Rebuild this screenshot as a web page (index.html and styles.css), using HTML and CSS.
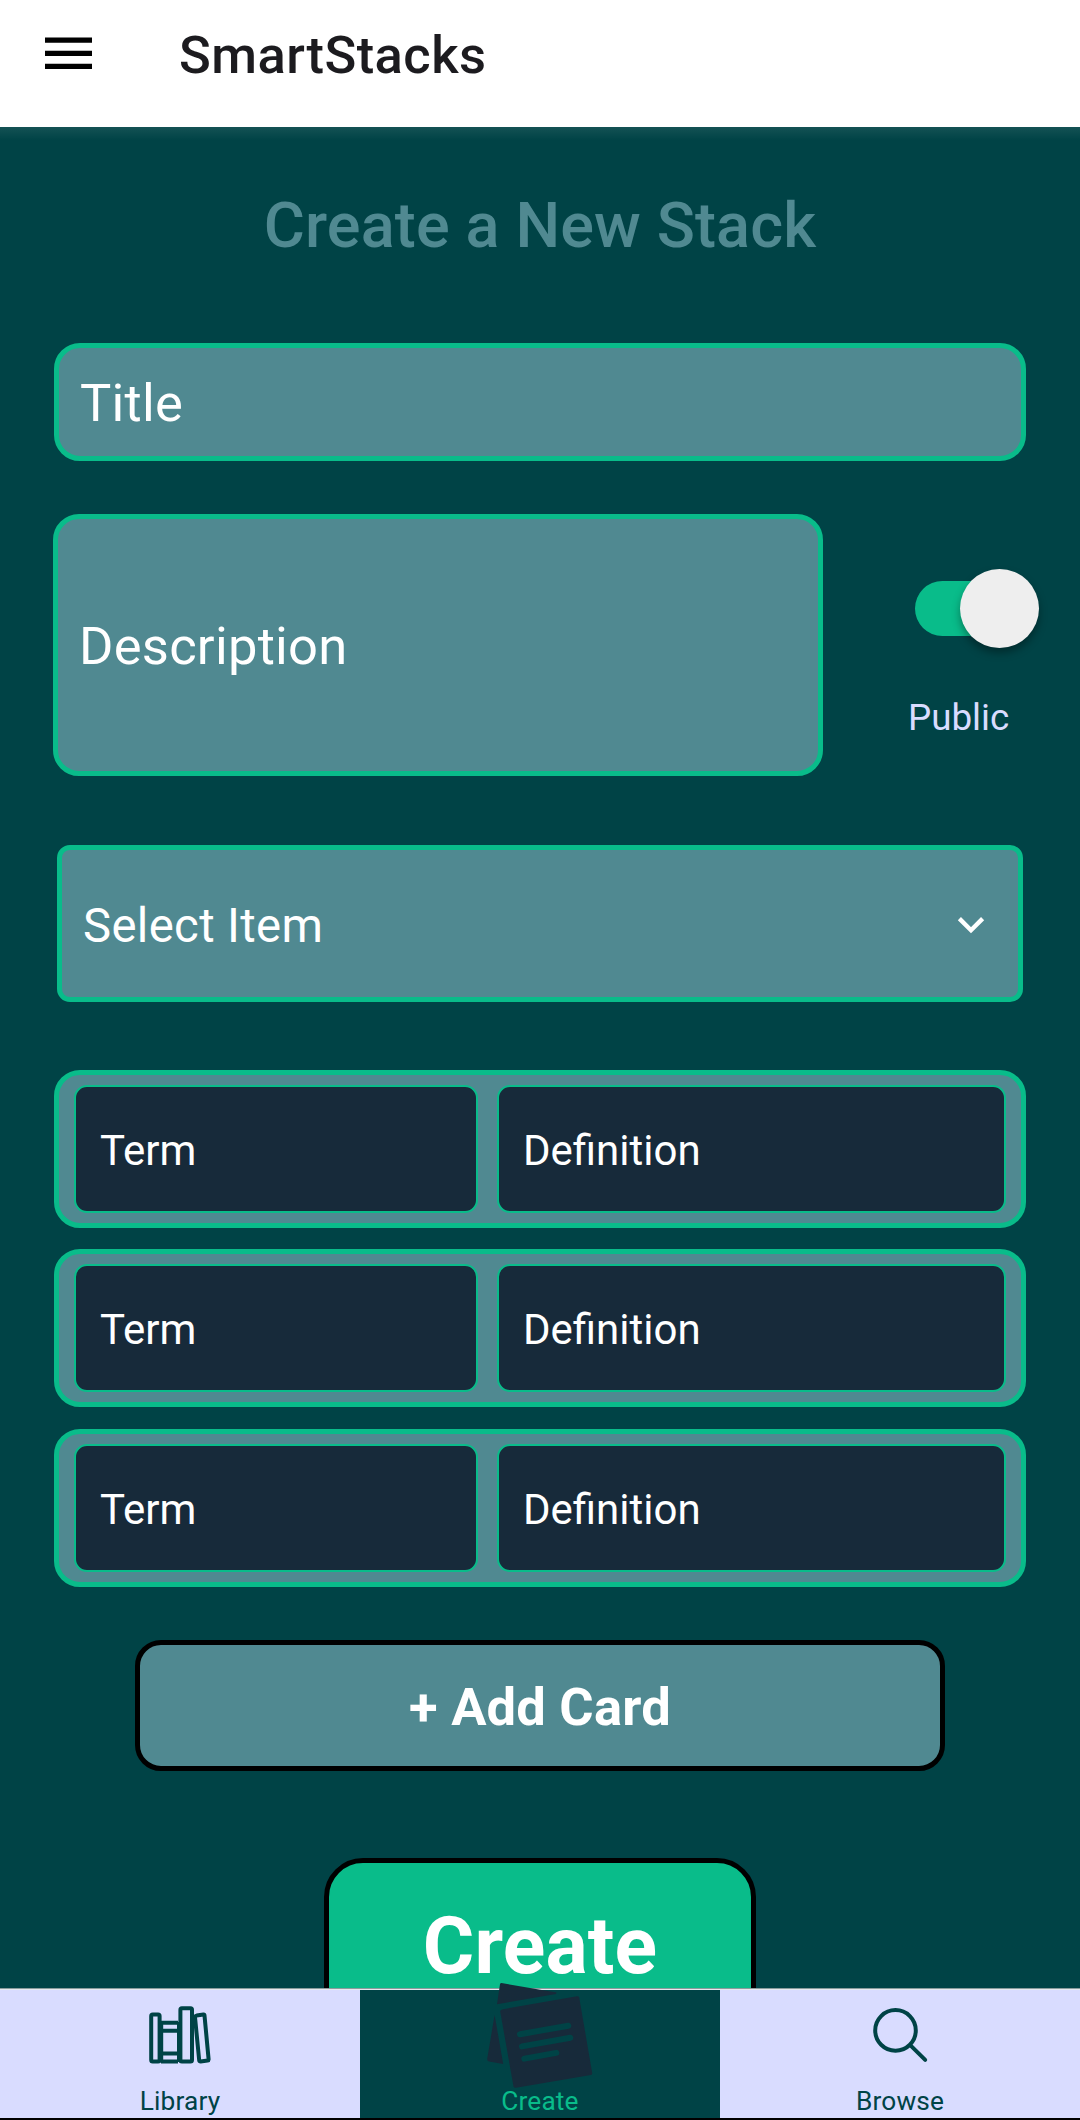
FILE: index.html
```html
<!DOCTYPE html>
<html lang="en">
<head>
<meta charset="utf-8">
<title>SmartStacks</title>
<link rel="stylesheet" href="styles.css">
</head>
<body>
<header class="app-bar">
  <svg class="menu-icon" width="47" height="32" viewBox="0 0 47 32"><path d="M0 .6h47v5.200H0zM0 13.800h47v5.200H0zM0 26.800h47v5.200H0z"/></svg>
  <span class="app-title">SmartStacks</span>
</header>
<main class="screen">
  <h1 class="heading">Create a New Stack</h1>
  <div class="field title-field">Title</div>
  <div class="details">
    <div class="field description-field">Description</div>
    <div class="visibility">
      <div class="switch"><span class="thumb"></span></div>
      <span class="switch-label">Public</span>
    </div>
  </div>
  <div class="field select-field">
    <span>Select Item</span>
    <svg class="chevron" width="28" height="18" viewBox="0 0 28 18"><path d="M2.400 2.600 14 14.200 25.600 2.600" fill="none" stroke="#fff" stroke-width="4.400"/></svg>
  </div>
  <div class="cards">
    <div class="card"><div class="cell term">Term</div><div class="cell definition">Definition</div></div>
    <div class="card"><div class="cell term">Term</div><div class="cell definition">Definition</div></div>
    <div class="card"><div class="cell term">Term</div><div class="cell definition">Definition</div></div>
  </div>
  <div class="button add-button">+ Add Card</div>
  <div class="button create-button">Create</div>
</main>
<nav class="tabs">
  <div class="tab">
    <svg class="tab-icon" width="110" height="110" viewBox="125 1980 110 110" fill="none" stroke="#004346" stroke-width="4" stroke-linejoin="round">
      <rect x="151.2" y="2014.6" width="8.4" height="47" rx="1.5"/>
      <path d="M161 2022.8h17M161 2030.8h17M161 2053.6h17M161 2061.6h17M161.2 2022v40"/>
      <rect x="180.4" y="2008.2" width="11.6" height="53.4" rx="1.5"/>
      <path d="M179 2022v40"/>
      <path d="M196.6 2015.6 203.4 2014.6Q204.400 2014.500 204.500 2015.500L208.600 2059.200Q208.700 2060.400 207.600 2060.600L200.600 2061.400Q199.400 2061.400 199.200 2060.400L195 2017.200Q195 2015.900 196.600 2015.600Z"/>
    </svg>
    <span class="tab-label">Library</span>
  </div>
  <div class="tab active">
    <svg class="tab-icon" width="110" height="110" viewBox="485 1980 110 110" fill="#172a3a">
      <path d="M501.500 1983 556.500 1992.600 556 1994 497 2004.200 500 1984.200Q500.300 1982.900 501.500 1983Z"/>
      <path d="M494.600 2015 503.200 2064 489 2061.600Q487 2061 487.200 2059Z"/>
      <path d="M502 2009.400 577 1996.200Q578.800 1996 579.200 1997.600L592.200 2073Q592.300 2074.600 590.800 2075L516 2087.800Q514 2088 513.500 2086.400L500.200 2011.400Q500.100 2009.800 502 2009.400Z"/>
      <path d="M520 2034.200 568.300 2025.700M522 2046.400 570.300 2037.800M524.300 2058.600 556.300 2052.900" stroke="#004346" stroke-width="6" stroke-linecap="round"/>
    </svg>
    <span class="tab-label">Create</span>
  </div>
  <div class="tab">
    <svg class="tab-icon" width="110" height="110" viewBox="845 1980 110 110" fill="none" stroke="#004346" stroke-width="4" stroke-linecap="round">
      <circle cx="895.500" cy="2030.400" r="20.300"/>
      <path d="M910.500 2045.400 925.200 2059.900"/>
    </svg>
    <span class="tab-label">Browse</span>
  </div>
</nav>
</body>
</html>
```
FILE: styles.css
```css
* { box-sizing: border-box; }

body {
  margin: 0;
  width: 1080px;
  height: 2120px;
  display: flex;
  flex-direction: column;
  overflow: hidden;
  background: #004346;
  color: #fff;
  font-family: Roboto, sans-serif;
}

.app-bar {
  flex: none;
  height: 127px;
  display: flex;
  align-items: flex-start;
  gap: 87px;
  padding: 0 45px;
  background: #fff;
  color: #1c1b1f;
}

.menu-icon { margin-top: 37px; }

.app-title {
  font-size: 52.5px;
  font-weight: 500;
  letter-spacing: .45px;
  line-height: 62px;
  margin-top: 24px;
}

.screen {
  flex: 1;
  min-height: 0;
  overflow: hidden;
  display: flex;
  flex-direction: column;
  align-items: center;
  background: linear-gradient(rgba(255, 255, 255, .08), transparent 13px);
}

.heading {
  flex: none;
  margin: 62px 0 80px;
  height: 74px;
  line-height: 74px;
  font-size: 63px;
  font-weight: 500;
  letter-spacing: .12px;
  color: #508991;
}

.field {
  flex: none;
  display: flex;
  align-items: center;
  border: 5.25px solid #09bc8a;
  border-radius: 26px;
  background: #508991;
  font-size: 52.5px;
  letter-spacing: .25px;
  padding: 2px 21px 0;
}

.title-field { width: 972px; height: 118px; }

.details {
  flex: none;
  width: 974px;
  height: 262px;
  margin: 53px 0 69px;
  display: flex;
}

.description-field { width: 770px; height: 262px; }

.visibility {
  flex: 1;
  display: flex;
  flex-direction: column;
  align-items: flex-start;
  padding: 67px 0 0 85px;
}

.switch {
  flex: none;
  width: 112px;
  height: 55px;
  border-radius: 28px;
  background: #09bc8a;
  display: flex;
  align-items: center;
  justify-content: flex-end;
  margin-left: 7px;
}

.thumb {
  flex: none;
  width: 79px;
  height: 79px;
  margin-right: -12px;
  border-radius: 50%;
  background: #eee;
  box-shadow: 0 5px 8px rgba(0, 0, 0, .35);
}

.switch-label {
  margin-top: 60px;
  font-size: 36.75px;
  line-height: 44px;
  color: #d9dcff;
}

.select-field {
  width: 966px;
  height: 157px;
  border-radius: 13px;
  font-size: 47.25px;
  letter-spacing: .35px;
  justify-content: space-between;
  padding: 4px 33px 0 21px;
}

.chevron { margin-bottom: 2px; }

.cards {
  flex: none;
  width: 972px;
  margin: 68px 0 53.4px;
  display: flex;
  flex-direction: column;
  gap: 21.3px;
}

.card {
  height: 158px;
  display: flex;
  gap: 19px;
  padding: 10px 15px;
  border: 5.25px solid #09bc8a;
  border-radius: 26px;
  background: #508991;
}

.cell {
  display: flex;
  align-items: center;
  border: 2.6px solid #09bc8a;
  border-radius: 13px;
  background: #172a3a;
  font-size: 42px;
  padding: 3px 24px 0;
}

.term { width: 404px; }
.definition { flex: 1; }

.button {
  flex: none;
  display: flex;
  align-items: center;
  justify-content: center;
  border: 5.25px solid #000;
  font-weight: 700;
  letter-spacing: .2px;
}

.add-button {
  width: 810px;
  height: 131px;
  padding-top: 3px;
  border-radius: 26px;
  background: #508991;
  font-size: 52.5px;
}

.create-button {
  width: 432px;
  height: 175px;
  margin-top: 87px;
  padding-top: 2px;
  border-radius: 39px;
  background: #09bc8a;
  font-size: 78.75px;
}

.tabs {
  flex: none;
  height: 132px;
  display: flex;
  border-top: 1px solid #8a9c9d;
  border-bottom: 2px solid #000;
  background: linear-gradient(#e6e8ee 1px, #d9dcff 1px);
}

.tab {
  flex: 1;
  display: flex;
  flex-direction: column;
  align-items: center;
  color: #004346;
  margin-top: 1px;
}

.active { background: #004346; color: #09bc8a; }

.tab-icon { flex: none; margin-top: -10px; }

.tab-label {
  font-size: 26.25px;
  letter-spacing: .15px;
  line-height: 30px;
  margin-top: -4px;
}
```
